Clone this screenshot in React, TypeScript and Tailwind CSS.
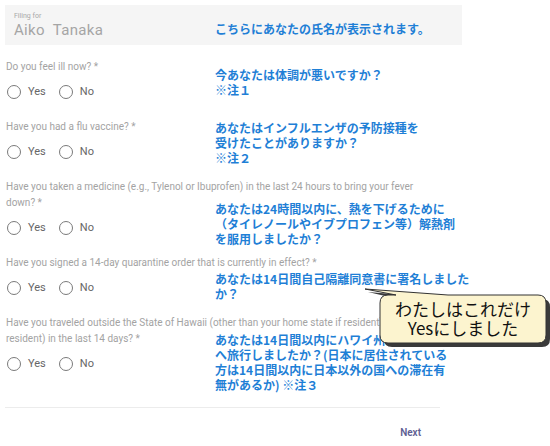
const questions: { label: string[]; }[] = [
  { label: ["Do you feel ill now? *"] },
  { label: ["Have you had a flu vaccine? *"] },
  {
    label: [
      "Have you taken a medicine (e.g., Tylenol or Ibuprofen) in the last 24 hours to bring your fever",
      "down? *",
    ],
  },
  { label: ["Have you signed a 14-day quarantine order that is currently in effect? *"] },
  {
    label: [
      "Have you traveled outside the State of Hawaii (other than your home state if resident)",
      "resident) in the last 14 days? *",
    ],
  },
];

const notes: { top: string; lines: string[] }[] = [
  { top: "top-[21px]", lines: ["こちらにあなたの氏名が表示されます。"] },
  { top: "top-[67px]", lines: ["今あなたは体調が悪いですか？", "※注１"] },
  { top: "top-[120px]", lines: ["あなたはインフルエンザの予防接種を", "受けたことがありますか？", "※注２"] },
  {
    top: "top-[201px]",
    lines: ["あなたは24時間以内に、熱を下げるために", "（タイレノールやイブプロフェン等）解熱剤", "を服用しましたか？"],
  },
  { top: "top-[271px]", lines: ["あなたは14日間自己隔離同意書に署名しました", "か？"] },
  {
    top: "top-[332px]",
    lines: [
      "あなたは14日間以内にハワイ州以外の場所",
      "へ旅行しましたか？(日本に居住されている",
      "方は14日間以内に日本以外の国への滞在有",
      "無があるか) ※注３",
    ],
  },
];

function Radio({ label }: { label: string }) {
  return (
    <div className="flex items-center gap-[7px]">
      <span className="h-[14px] w-[14px] rounded-full border-[1.5px] border-[#7a7a7a]" />
      <span className="text-[11px] text-[#666]">{label}</span>
    </div>
  );
}

export default function App() {
  return (
    <div
      className="relative h-[446px] w-[550px] overflow-hidden bg-white"
      style={{ fontFamily: "Roboto, 'Noto Sans CJK JP', sans-serif" }}
    >
      <div className="w-[462px] pl-[5px] pt-[5px]">
        <div className="flex h-[40px] flex-col justify-center bg-[#f5f5f5] pl-[9px]">
          <div className="text-[7px] leading-[9px] text-[#a8a8a8]">Filing for</div>
          <div className="text-[15px] leading-[18px] tracking-[0.3px] text-[#a5a5a5]">
            Aiko&nbsp;&nbsp;Tanaka
          </div>
        </div>

        <div className="mt-[14px] flex flex-col pl-[1px]">
          {questions.map((q, i) => (
            <div key={i} className="pb-[17px]">
              <div className="mb-[7px] whitespace-nowrap text-[10px] leading-[16px] text-[#a3a3a3]">
                {q.label.map((l, j) => (
                  <div key={j}>{l}</div>
                ))}
              </div>
              <div className="flex h-[20px] items-center gap-[13px] pl-[1px]">
                <Radio label="Yes" />
                <Radio label="No" />
              </div>
            </div>
          ))}
        </div>

        <div className="mt-[16px] h-px w-[435px] bg-[#ececec]" />
        <div className="flex w-[435px] justify-end pr-[19px] pt-[17px]">
          <span className="text-[10px] font-semibold text-[#5e5e92]">Next</span>
        </div>
      </div>

      {notes.map((n, i) => (
        <div
          key={i}
          className={`absolute left-[215px] ${n.top} whitespace-nowrap text-[12px] font-bold leading-[15px] text-[#1f7fd6]`}
          style={{ fontFamily: "'Noto Sans CJK JP', sans-serif" }}
        >
          {n.lines.map((l, j) => (
            <div key={j}>{l}</div>
          ))}
        </div>
      ))}

      <div className="absolute left-[360px] top-[285px] h-[64px] w-[190px]">
        <svg width="190" height="64" viewBox="0 0 190 64" className="absolute left-0 top-0">
          <path
            d="M30 12 Q22 12 22 20 L22 52 Q22 60 30 60 L180 60 Q188 60 188 52 L188 20 Q188 12 180 12 L90 12 L6 5 L36 12 Z"
            fill="#3a3a3a"
            transform="translate(2 2)"
          />
          <path
            d="M28 10 Q20 10 20 18 L20 50 Q20 58 28 58 L178 58 Q186 58 186 50 L186 18 Q186 10 178 10 L88 10 L5 4 L36 10 Z"
            fill="#fcf4cf"
            stroke="#333"
            strokeWidth="1"
          />
        </svg>
        <div
          className="absolute left-[20px] top-[14px] flex w-[166px] flex-col items-center text-[17px] leading-[19px] text-[#111]"
          style={{ fontFamily: "'Noto Sans CJK JP', sans-serif" }}
        >
          <div>わたしはこれだけ</div>
          <div>Yesにしました</div>
        </div>
      </div>
    </div>
  );
}
